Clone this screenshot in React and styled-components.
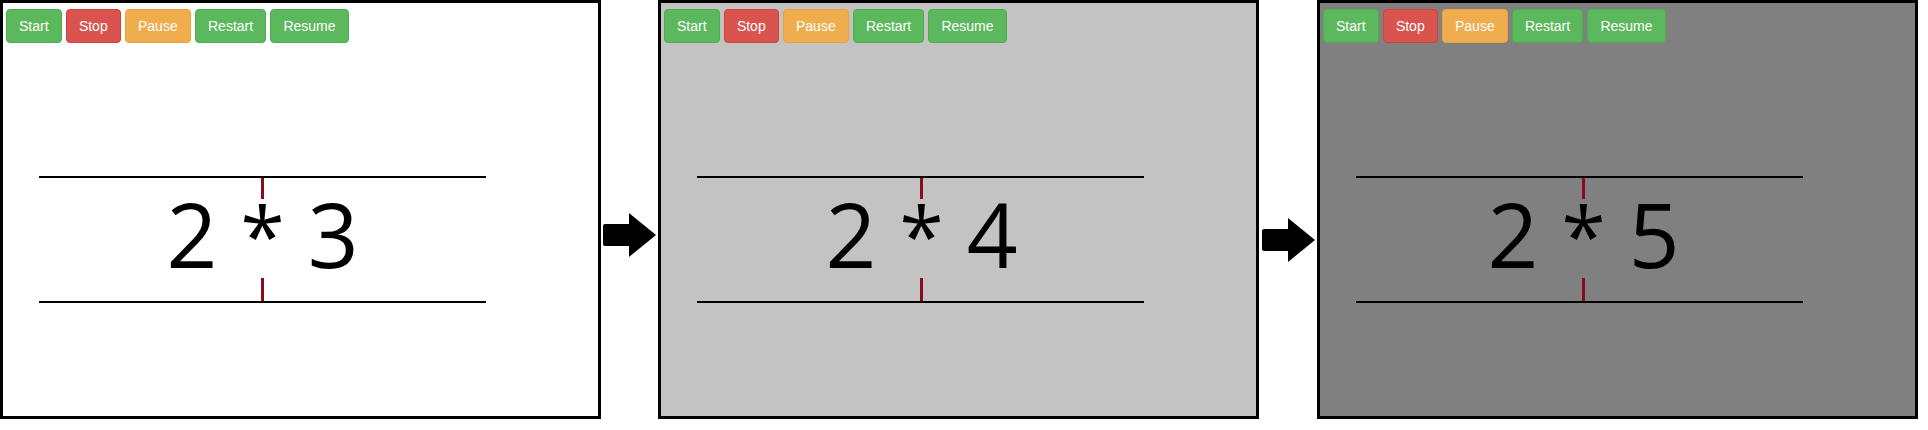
import React from 'react';
import styled, { createGlobalStyle } from 'styled-components';

const GlobalStyle = createGlobalStyle`
  html, body { margin: 0; padding: 0; background: #ffffff; }
  body { font-family: "Liberation Sans", Arial, sans-serif; }
`;

const Strip = styled.div`
  display: flex;
  align-items: flex-start;
  width: 1918px;
`;

const Stage = styled.section`
  box-sizing: border-box;
  flex: none;
  width: 601px;
  height: 419px;
  border: 3px solid #000;
  background: ${(p) => p.$bg};
  display: flex;
  flex-direction: column;
`;

const Toolbar = styled.div`
  display: flex;
  gap: 4.3px;
  padding: 6px 3px 0;
`;

const Button = styled.button`
  box-sizing: border-box;
  height: 34px;
  margin: 0;
  padding: 6px 12px;
  border: 1px solid ${(p) => p.$border};
  border-radius: 4px;
  background: ${(p) => p.$bg};
  color: #ffffff;
  font-family: "Liberation Sans", Arial, sans-serif;
  font-size: 14px;
  line-height: 20px;
  white-space: nowrap;
  cursor: pointer;
`;

const Equation = styled.div`
  box-sizing: border-box;
  width: 447px;
  height: 127px;
  margin: 133px 0 0 36px;
  border-top: 2px solid #000;
  border-bottom: 2px solid #000;
  display: flex;
  flex-direction: column;
  align-items: center;
`;

const Column = styled.div`
  display: flex;
  flex-direction: column;
  align-items: center;
  margin-left: ${(p) => p.$shift * 2}px;
  height: 100%;
`;

const Tick = styled.div`
  flex: none;
  width: 3px;
  height: ${(p) => p.$h}px;
  background: #8b0a1c;
`;

const Expression = styled.div`
  box-sizing: border-box;
  flex: none;
  height: 79px;
  padding-bottom: 10px;
  display: flex;
  align-items: center;
  justify-content: center;
  font-family: "Open Sans", "Noto Sans", sans-serif;
  font-size: 89px;
  font-weight: 500;
  line-height: 1;
  color: #000;
  white-space: pre;
`;

const Operator = styled.span`
  font-size: 80px;
  vertical-align: 4px;
`;

const ArrowSlot = styled.div`
  box-sizing: border-box;
  flex: none;
  width: ${(p) => p.$w}px;
  padding-top: ${(p) => p.$top}px;
  display: flex;
  justify-content: center;
`;

const ArrowIcon = () => (
  <svg width="53" height="44" viewBox="0 0 53 44">
    <path d="M2 11 H26 V0 L53 22 L26 44 V33 H2 Q0 33 0 31 V13 Q0 11 2 11 Z" fill="#000" />
  </svg>
);

const BUTTONS = [
  { label: 'Start', bg: '#5cb85c', border: '#4cae4c' },
  { label: 'Stop', bg: '#d9534f', border: '#d43f3a' },
  { label: 'Pause', bg: '#f0ad4e', border: '#eea236' },
  { label: 'Restart', bg: '#5cb85c', border: '#4cae4c' },
  { label: 'Resume', bg: '#5cb85c', border: '#4cae4c' },
];

const STEPS = [
  { bg: '#ffffff', n: 3, shift: 0 },
  { bg: '#c3c3c3', n: 4, shift: 1 },
  { bg: '#808080', n: 5, shift: 4 },
];

const ARROWS = [
  { w: 57, top: 213 },
  { w: 58, top: 218 },
];

function Panel({ step }) {
  return (
    <Stage $bg={step.bg}>
      <Toolbar>
        {BUTTONS.map((b) => (
          <Button key={b.label} $bg={b.bg} $border={b.border}>
            {b.label}
          </Button>
        ))}
      </Toolbar>
      <Equation>
        <Column $shift={step.shift}>
          <Tick $h={21} />
          <Expression>
            {'2 '}
            <Operator>*</Operator>
            {` ${step.n}`}
          </Expression>
          <Tick $h={23} />
        </Column>
      </Equation>
    </Stage>
  );
}

export default function App() {
  return (
    <>
      <GlobalStyle />
      <Strip>
        {STEPS.map((step, i) => (
          <React.Fragment key={step.n}>
            <Panel step={step} />
            {i < ARROWS.length && (
              <ArrowSlot $w={ARROWS[i].w} $top={ARROWS[i].top}>
                <ArrowIcon />
              </ArrowSlot>
            )}
          </React.Fragment>
        ))}
      </Strip>
    </>
  );
}
